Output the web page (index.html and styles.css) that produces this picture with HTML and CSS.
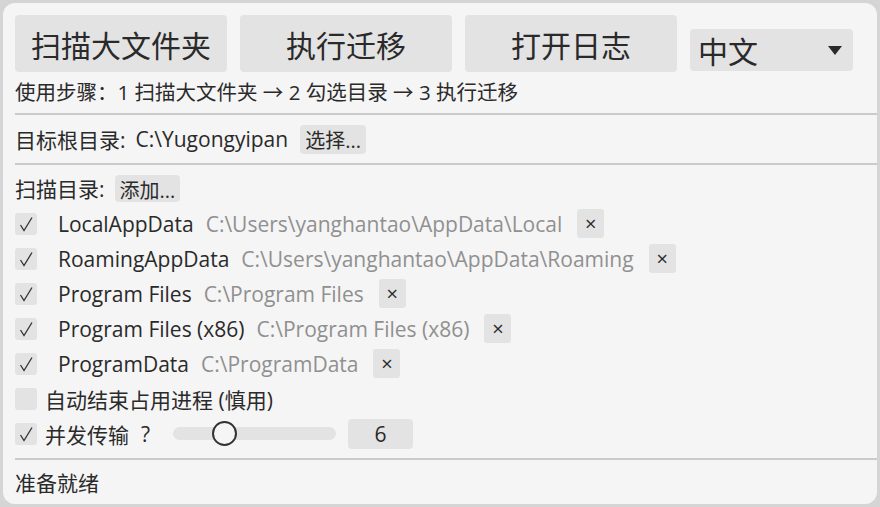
FILE: index.html
```html
<!DOCTYPE html>
<html lang="zh-CN">
<head>
    <meta charset="UTF-8">
    <meta name="viewport" content="width=device-width, initial-scale=1.0">
    <title>愚公移盘</title>
    <link rel="stylesheet" href="styles.css">
</head>
<body>
    <div class="window">
        <div class="toolbar">
            <button class="big-btn">扫描大文件夹</button>
            <button class="big-btn">执行迁移</button>
            <button class="big-btn">打开日志</button>
            <div class="combo">
                <span>中文</span>
                <svg class="combo-arrow" width="14" height="9" viewBox="0 0 14 9"><path d="M0 0 H14 L7 9 Z" fill="#2a2a2a"/></svg>
            </div>
        </div>
        <div class="steps">使用步骤：1 扫描大文件夹 → 2 勾选目录 → 3 执行迁移</div>
        <div class="sep"></div>

        <div class="target-row">
            <span>目标根目录:</span>
            <span class="target-path">C:\Yugongyipan</span>
            <button class="small-btn">选择...</button>
        </div>
        <div class="sep"></div>

        <div class="scan-row">
            <span>扫描目录:</span>
            <button class="small-btn">添加...</button>
        </div>

        <div id="dir-list" class="dir-list"></div>

        <div class="option-row">
            <span class="check"></span>
            <span class="option-label">自动结束占用进程 (慎用)</span>
        </div>
        <div class="option-row">
            <span class="check checked"></span>
            <span class="option-label">并发传输</span>
            <span class="help">?</span>
            <div class="slider">
                <div class="knob"></div>
            </div>
            <div class="spin">6</div>
        </div>
        <div class="sep sep-bottom"></div>

        <div class="status">准备就绪</div>
    </div>

    <script>
        // Directories shown in the scan list
        const dirs = [
            { name: 'LocalAppData', path: 'C:\\Users\\yanghantao\\AppData\\Local' },
            { name: 'RoamingAppData', path: 'C:\\Users\\yanghantao\\AppData\\Roaming' },
            { name: 'Program Files', path: 'C:\\Program Files' },
            { name: 'Program Files (x86)', path: 'C:\\Program Files (x86)' },
            { name: 'ProgramData', path: 'C:\\ProgramData' }
        ];

        const list = document.getElementById('dir-list');
        dirs.forEach(dir => {
            const row = document.createElement('div');
            row.className = 'dir-row';
            row.innerHTML = `
                <span class="check checked"></span>
                <span class="dir-name">${dir.name}</span>
                <span class="dir-path">${dir.path}</span>
                <button class="remove-btn">×</button>
            `;
            list.appendChild(row);
        });
    </script>
</body>
</html>
```

FILE: styles.css
```css
* {
    margin: 0;
    padding: 0;
    box-sizing: border-box;
}

body {
    background-color: #d5d5d5;
    font-family: "Open Sans", "Noto Sans CJK SC", sans-serif;
    color: #2a2a2a;
    padding: 3px;
}

.window {
    height: 501px;
    background-color: #f5f5f5;
    border-radius: 12px;
    padding: 12px 0 0 12px;
    font-size: 21px;
}

button {
    font-family: inherit;
    color: inherit;
    border: none;
    background-color: #e3e3e3;
    border-radius: 4px;
}

.toolbar {
    display: flex;
    align-items: flex-end;
    gap: 13px;
}

.big-btn {
    width: 212px;
    height: 57px;
    font-size: 30px;
}

.combo {
    width: 163px;
    height: 42px;
    margin-bottom: 1px;
    background-color: #e3e3e3;
    border-radius: 4px;
    display: flex;
    align-items: center;
    justify-content: space-between;
    padding: 0 11px 0 8px;
    font-size: 30px;
}

.steps {
    height: 41px;
    line-height: 40px;
    font-size: 20.5px;
}

.sep {
    height: 2px;
    background-color: #cbcbcb;
}

.target-row {
    height: 48px;
    display: flex;
    align-items: center;
}

.target-path {
    margin-left: 10px;
}

.target-row .small-btn {
    margin-left: 12px;
}

.small-btn {
    height: 29px;
    padding: 0 5px;
    font-size: 20px;
}

.scan-row {
    display: flex;
    align-items: center;
    gap: 10px;
    height: 28px;
    margin-top: 9px;
}

.scan-row .small-btn {
    height: 27px;
}

.dir-list {
    margin-top: 4px;
}

.dir-row,
.option-row {
    height: 35px;
    display: flex;
    align-items: center;
}

.check {
    width: 22px;
    height: 22px;
    border-radius: 3px;
    background-color: #e3e3e3;
    flex-shrink: 0;
    position: relative;
}

.check.checked::after {
    content: "";
    position: absolute;
    left: 4px;
    top: 3px;
    width: 14px;
    height: 16px;
    background: url("data:image/svg+xml;utf8,<svg xmlns='http://www.w3.org/2000/svg' width='14' height='16' viewBox='0 0 14 16'><path d='M1.5 9 L5 14.5 L13 1.5' fill='none' stroke='%23333' stroke-width='1.3'/></svg>") no-repeat;
}

.dir-name {
    margin-left: 21px;
}

.dir-path {
    margin-left: 12px;
    color: #909090;
}

.remove-btn {
    width: 27px;
    height: 29px;
    margin-left: 15px;
    font-size: 20px;
    border-radius: 3px;
}

.option-label {
    margin-left: 8px;
}

.help {
    margin-left: 12px;
}

.slider {
    position: relative;
    width: 163px;
    height: 13px;
    margin-left: 23px;
    background-color: #e3e3e3;
    border-radius: 7px;
}

.knob {
    position: absolute;
    left: 39px;
    top: -6px;
    width: 25px;
    height: 25px;
    border-radius: 50%;
    border: 2px solid #333;
    background-color: #f5f5f5;
}

.spin {
    width: 65px;
    height: 30px;
    margin-left: 12px;
    background-color: #e3e3e3;
    border-radius: 4px;
    text-align: center;
    line-height: 30px;
}

.sep-bottom {
    margin-top: 7px;
}

.status {
    height: 46px;
    line-height: 46px;
}
```
